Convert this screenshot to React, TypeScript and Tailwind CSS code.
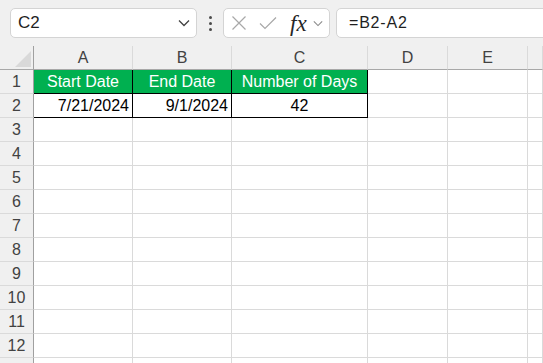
import React from 'react';

const font = { fontFamily: '"Liberation Sans", Arial, sans-serif' };

const gridCols = 'grid grid-cols-[34px_99px_99px_136px_80px_80px_1fr]';
const letters = ['A', 'B', 'C', 'D', 'E', ''];

function Chevron({ className }: { className?: string }) {
  return (
    <svg viewBox="0 0 12 8" className={className} fill="none" stroke="currentColor" strokeWidth="1.3">
      <path d="M1 1.5 L6 6.5 L11 1.5" />
    </svg>
  );
}

function Toolbar() {
  return (
    <div className="flex h-[46px] items-start overflow-hidden bg-[#f0f0f0] pt-2 pl-[10px]">
      <div className="flex h-[30px] w-[187px] shrink-0 items-center justify-between rounded-[5px] border border-[#d4d4d4] bg-white pl-[7px] pr-[6px]">
        <span className="text-[17px] text-[#1f1f1f]">C2</span>
        <Chevron className="h-[8px] w-[12px] text-[#424242]" />
      </div>
      <div className="flex h-[30px] w-[26px] shrink-0 flex-col items-center justify-center gap-[3px]">
        <span className="h-[3px] w-[3px] rounded-full bg-[#4a4a4a]" />
        <span className="h-[3px] w-[3px] rounded-full bg-[#4a4a4a]" />
        <span className="h-[3px] w-[3px] rounded-full bg-[#4a4a4a]" />
      </div>
      <div className="flex h-[30px] w-[107px] shrink-0 items-center rounded-[5px] border border-[#d4d4d4] bg-white">
        <svg viewBox="0 0 16 16" className="ml-[7px] h-[16px] w-[16px] text-[#a8a8a8]" fill="none" stroke="currentColor" strokeWidth="1.2">
          <path d="M1.5 1.5 L14.5 14.5 M14.5 1.5 L1.5 14.5" />
        </svg>
        <svg viewBox="0 0 18 14" className="ml-[12px] h-[14px] w-[18px] text-[#a8a8a8]" fill="none" stroke="currentColor" strokeWidth="1.2">
          <path d="M1 7.5 L6 12.5 L17 1.5" />
        </svg>
        <span
          className="ml-[13px] text-[23px] italic leading-none text-[#262626]"
          style={{ fontFamily: '"Liberation Serif", "Times New Roman", serif' }}
        >
          fx
        </span>
        <Chevron className="ml-[6px] h-[7px] w-[10px] text-[#8a8a8a]" />
      </div>
      <div className="ml-[6px] flex h-[30px] w-[230px] shrink-0 items-center rounded-[5px] border border-[#d4d4d4] bg-white pl-[12px]">
        <span className="text-[16px] tracking-[0.8px] text-[#1f1f1f]">=B2-A2</span>
      </div>
    </div>
  );
}

function HeaderRow() {
  return (
    <div className={`${gridCols} h-6 bg-[#f0f0f0] leading-5`}>
      <div className="relative overflow-hidden border-r border-b border-r-[#a0a0a0] border-b-[#a8a8a8]">
        <svg viewBox="0 0 16 16" className="absolute right-[2px] bottom-[2px] h-[16px] w-[16px]">
          <polygon points="16,0 16,16 0,16" fill="#d9d9d9" />
        </svg>
      </div>
      {letters.map((l, i) => (
        <div
          key={i}
          className="flex items-center justify-center overflow-hidden border-r border-b border-r-[#dadada] border-b-[#a8a8a8] text-[16px] text-[#424242]"
        >
          {l}
        </div>
      ))}
    </div>
  );
}

type Cell = { text?: string; kind?: 'head' | 'right' | 'center' };

const data: Record<number, Cell[]> = {
  1: [
    { text: 'Start Date', kind: 'head' },
    { text: 'End Date', kind: 'head' },
    { text: 'Number of Days', kind: 'head' },
  ],
  2: [
    { text: '7/21/2024', kind: 'right' },
    { text: '9/1/2024', kind: 'right' },
    { text: '42', kind: 'center' },
  ],
};

function Row({ n, label }: { n: number; label: boolean }) {
  const cells = data[n] ?? [];
  return (
    <div className={`${gridCols} h-6 leading-5`}>
      <div className="flex items-center justify-center overflow-hidden border-r border-b border-r-[#a0a0a0] border-b-[#dadada] bg-[#f0f0f0] text-[16px] text-[#424242]">
        {label ? n : null}
      </div>
      {[0, 1, 2, 3, 4, 5].map((i) => {
        const c = cells[i];
        if (!c) {
          return <div key={i} className="border-r border-b border-[#dadada] bg-white" />;
        }
        if (c.kind === 'head') {
          return (
            <div
              key={i}
              className="flex items-center justify-center overflow-hidden border-r border-b border-black bg-[#00b050] text-[16px] text-white"
            >
              {c.text}
            </div>
          );
        }
        return (
          <div
            key={i}
            className={
              c.kind === 'right'
                ? 'flex items-center justify-end overflow-hidden border-r border-b border-black bg-white pr-[3px] text-[16px] text-black'
                : 'flex items-center justify-center overflow-hidden border-r border-b border-black bg-white text-[16px] text-black'
            }
          >
            {c.text}
          </div>
        );
      })}
    </div>
  );
}

export default function App() {
  const rows = Array.from({ length: 13 }, (_, i) => i + 1);
  return (
    <div className="h-[363px] w-[543px] overflow-hidden bg-white" style={font}>
      <Toolbar />
      <HeaderRow />
      {/* row 13 only peeks in at the bottom edge, its number is below the fold */}
      {rows.map((n) => (
        <Row key={n} n={n} label={n <= 12} />
      ))}
    </div>
  );
}
